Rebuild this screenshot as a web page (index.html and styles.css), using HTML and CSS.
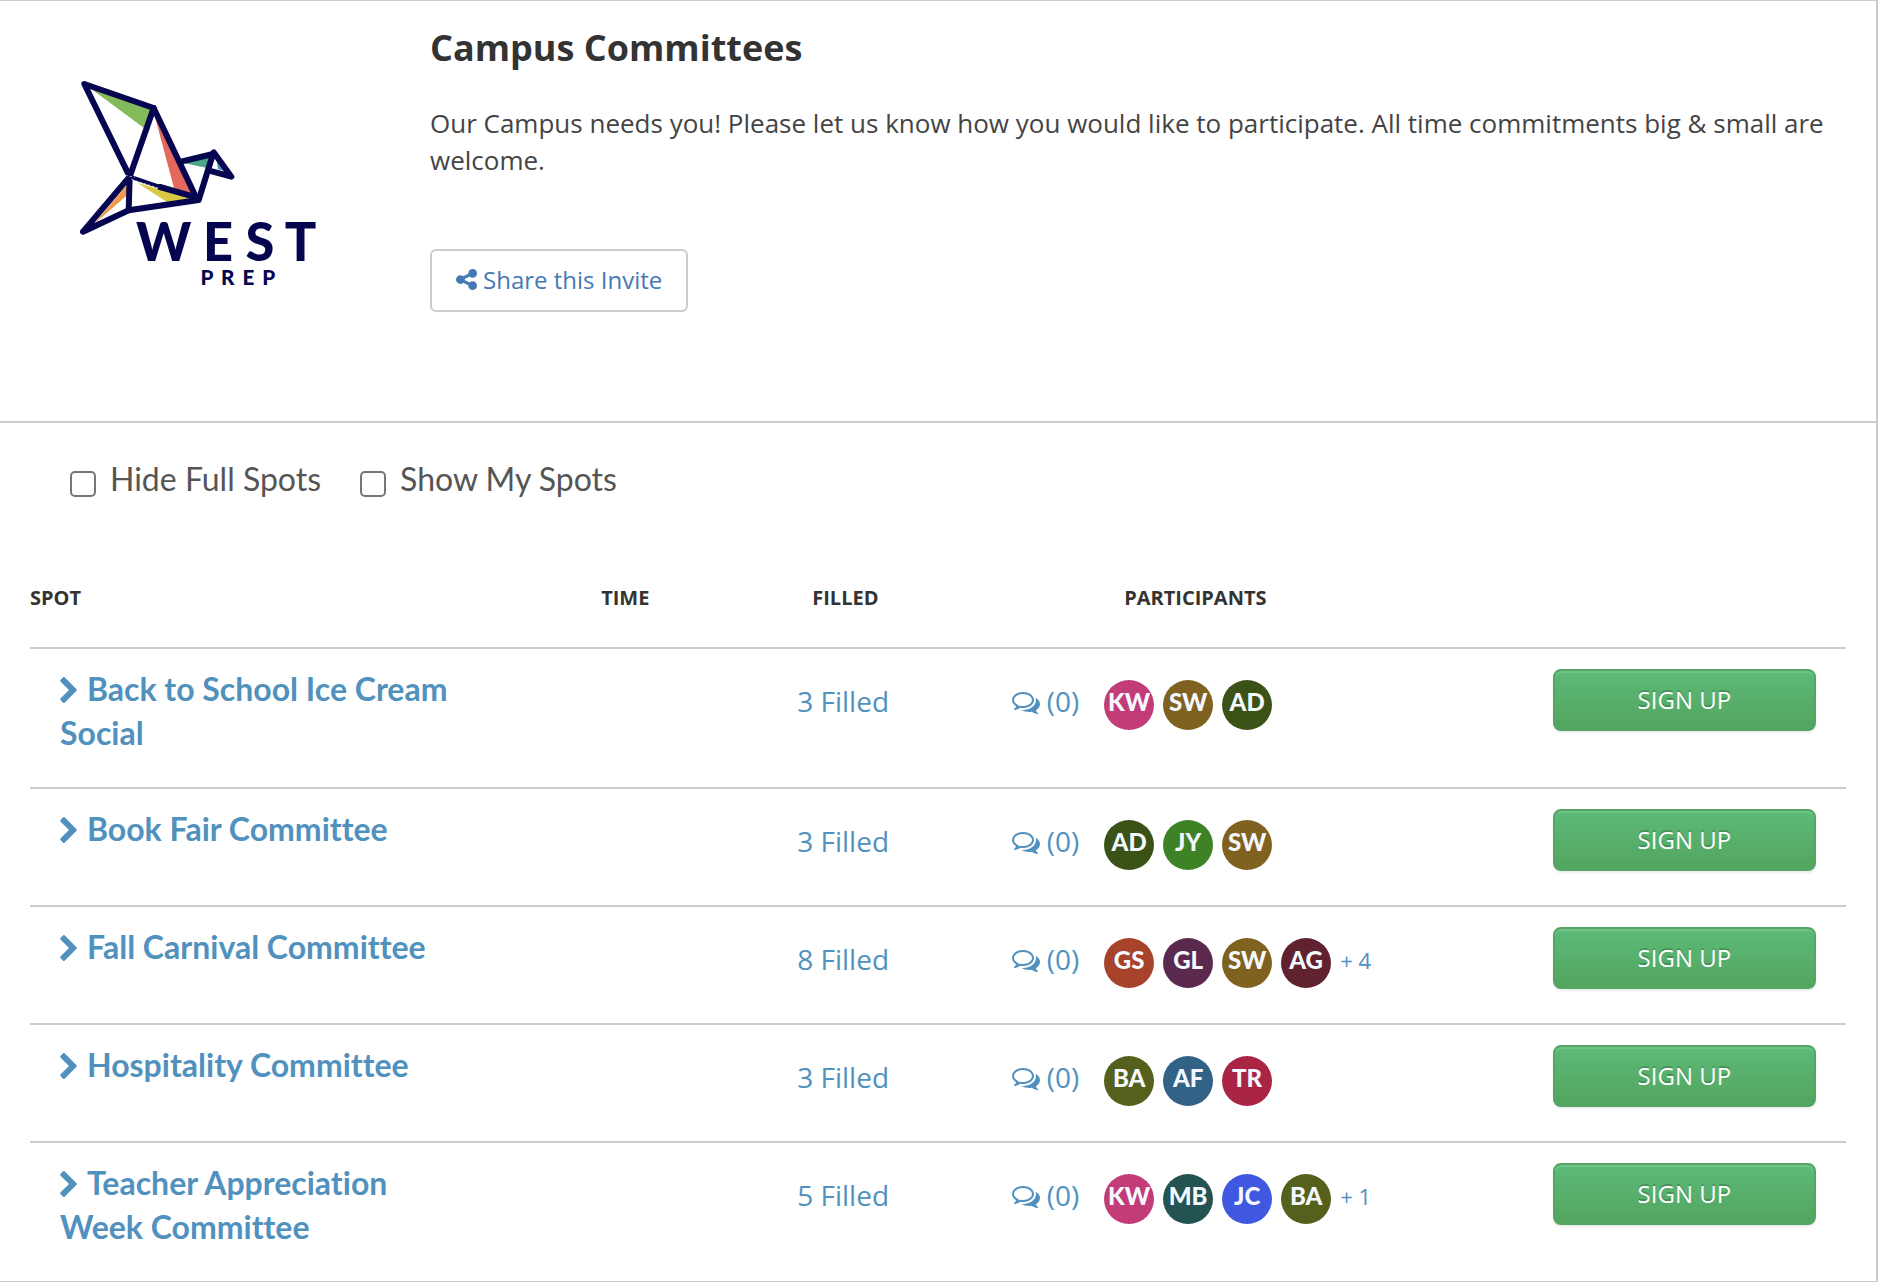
FILE: index.html
```html
<!DOCTYPE html>
<html lang="en">
<head>
<meta charset="utf-8">
<title>Campus Committees</title>
<link rel="stylesheet" href="styles.css">
</head>
<body>
<svg class="sprite" aria-hidden="true">
  <symbol id="share" viewBox="128 128 1536 1536"><path d="M1344 1024q133 0 226.500 93.500t93.500 226.500-93.500 226.500-226.500 93.500-226.500-93.500-93.500-226.500q0-12 2-34l-360-180q-92 86-218 86-133 0-226.500-93.500t-93.500-226.500 93.500-226.500 226.500-93.500q126 0 218 86l360-180q-2-22-2-34 0-133 93.500-226.500t226.500-93.500 226.500 93.500 93.500 226.500-93.500 226.500-226.500 93.500q-126 0-218-86l-360 180q2 22 2 34t-2 34l360 180q92-86 218-86z"/></symbol>
  <symbol id="chevron" viewBox="346 26 1036 1612"><path d="M1363 877l-742 742q-19 19-45 19t-45-19l-166-166q-19-19-19-45t19-45l531-531-531-531q-19-19-19-45t19-45l166-166q19-19 45-19t45 19l742 742q19 19 19 45t-19 45z"/></symbol>
  <symbol id="comments" viewBox="0 256 1792 1408"><path d="M704 384q-153 0-286 52t-211.500 141-78.500 191q0 82 53 158t149 132l97 56-35 84q34-20 62-39l44-31 53 10q78 14 153 14 153 0 286-52t211.500-141 78.500-191-78.500-191-211.500-141-286-52zm0-128q191 0 353.500 68.500t256.500 186.500 94 257-94 257-256.500 186.500-353.500 68.500q-86 0-176-16-124 88-278 128-36 9-86 16h-3q-11 0-20.500-8t-11.500-21q-1-3-1-6.500t.5-6.500 2-6l2.500-5 3.500-5.500 4-5 4.500-5 4-4.500q5-6 23-25t26-29.500 22.500-29 25-38.500 20.500-44q-124-72-195-177t-71-224q0-139 94-257t256.500-186.500 353.500-68.500zm822 1169q10 24 20.500 44t25 38.500 22.500 29 26 29.500 23 25q1 1 4 4.500t4.500 5 4 5 3.500 5.500l2.500 5 2 6 .5 6.500-1 6.500q-3 14-13 22t-22 7q-50-7-86-16-154-40-278-128-90 16-176 16-271 0-472-132 58 4 88 4 161 0 309-45t264-129q125-92 192-212t67-254q0-77-23-152 129 71 204 178t75 230q0 120-71 224.500t-195 176.500z"/></symbol>
</svg>
<main class="page">
  <header class="invite">
    <svg class="logo" viewBox="0 0 840 720" role="img" aria-label="West Prep">
      <path fill="#84ba59" d="M95 88L276 150L252 204Z"/>
      <path fill="#e2695c" d="M282 160L408 408L342 384Z"/>
      <path fill="#4ba587" d="M368 308L460 286L445 325Z"/>
      <path fill="#4a9cc0" d="M470 302L492 332L474 328Z"/>
      <path fill="#d8ca40" d="M232 368L390 416L322 427Z"/>
      <path fill="#f09a4c" d="M203 372L203 404L102 492Z"/>
      <g fill="none" stroke="#05064f" stroke-width="18" stroke-linejoin="round" stroke-linecap="round">
        <path d="M209 350L73 72L281 144L411 418"/>
        <path d="M281 144L209 350L69 515L206 451L209 350"/>
        <path d="M300 381L411 413"/>
        <path d="M206 451L416 420L459 282L366 304"/>
        <path d="M461 277L514 350L456 334"/>
      </g>
      <path fill="none" stroke="#05064f" stroke-width="12" d="M209 350L304 382"/>
      <path fill="none" stroke="#fff" stroke-width="2" stroke-dasharray="7 6" d="M214 358L300 386M196 346L224 352"/>
      <g class="logo-text" text-anchor="middle">
        <text class="logo-west" x="311 474 600 722" y="603">WEST</text>
        <text class="logo-prep" x="441 503 565 626" y="675">PREP</text>
      </g>
    </svg>
    <div class="intro">
      <h1>Campus Committees</h1>
      <p>Our Campus needs you! Please let us know how you would like to participate. All time commitments big &amp; small are welcome.</p>
      <button class="share" type="button"><svg class="share-icon"><use href="#share"/></svg>Share this Invite</button>
    </div>
  </header>
  <section class="spots">
    <form class="filters">
      <label><input type="checkbox">Hide Full Spots</label>
      <label><input type="checkbox">Show My Spots</label>
    </form>
    <table>
      <colgroup><col class="c-spot"><col class="c-time"><col class="c-filled"><col class="c-talk"><col class="c-people"><col class="c-action"></colgroup>
      <thead>
        <tr><th>SPOT</th><th>TIME</th><th class="th-filled">FILLED</th><th></th><th class="th-people">PARTICIPANTS</th><th></th></tr>
      </thead>
      <tbody>
        <tr>
          <td class="spot"><a href="#"><svg class="chevron"><use href="#chevron"/></svg>Back to School Ice Cream Social</a></td><td></td>
          <td class="info"><a href="#">3 Filled</a></td>
          <td class="info"><a href="#"><svg class="comments"><use href="#comments"/></svg> (0)</a></td>
          <td class="people"><div><span class="avatar kw">KW</span><span class="avatar sw">SW</span><span class="avatar ad">AD</span></div></td>
          <td class="action"><button type="button">SIGN UP</button></td>
        </tr>
        <tr>
          <td class="spot"><a href="#"><svg class="chevron"><use href="#chevron"/></svg>Book Fair Committee</a></td><td></td>
          <td class="info"><a href="#">3 Filled</a></td>
          <td class="info"><a href="#"><svg class="comments"><use href="#comments"/></svg> (0)</a></td>
          <td class="people"><div><span class="avatar ad">AD</span><span class="avatar jy">JY</span><span class="avatar sw">SW</span></div></td>
          <td class="action"><button type="button">SIGN UP</button></td>
        </tr>
        <tr>
          <td class="spot"><a href="#"><svg class="chevron"><use href="#chevron"/></svg>Fall Carnival Committee</a></td><td></td>
          <td class="info"><a href="#">8 Filled</a></td>
          <td class="info"><a href="#"><svg class="comments"><use href="#comments"/></svg> (0)</a></td>
          <td class="people"><div><span class="avatar gs">GS</span><span class="avatar gl">GL</span><span class="avatar sw">SW</span><span class="avatar ag">AG</span><a class="more" href="#">+ 4</a></div></td>
          <td class="action"><button type="button">SIGN UP</button></td>
        </tr>
        <tr>
          <td class="spot"><a href="#"><svg class="chevron"><use href="#chevron"/></svg>Hospitality Committee</a></td><td></td>
          <td class="info"><a href="#">3 Filled</a></td>
          <td class="info"><a href="#"><svg class="comments"><use href="#comments"/></svg> (0)</a></td>
          <td class="people"><div><span class="avatar ba">BA</span><span class="avatar af">AF</span><span class="avatar tr">TR</span></div></td>
          <td class="action"><button type="button">SIGN UP</button></td>
        </tr>
        <tr>
          <td class="spot"><a href="#"><svg class="chevron"><use href="#chevron"/></svg>Teacher Appreciation Week Committee</a></td><td></td>
          <td class="info"><a href="#">5 Filled</a></td>
          <td class="info"><a href="#"><svg class="comments"><use href="#comments"/></svg> (0)</a></td>
          <td class="people"><div><span class="avatar kw">KW</span><span class="avatar mb">MB</span><span class="avatar jc">JC</span><span class="avatar ba">BA</span><a class="more" href="#">+ 1</a></div></td>
          <td class="action"><button type="button">SIGN UP</button></td>
        </tr>
      </tbody>
    </table>
  </section>
</main>
</body>
</html>
```
FILE: styles.css
```css
* { box-sizing: border-box; }

body {
  margin: 0;
  background: #fff;
  color: #444;
  font-family: "Open Sans", sans-serif;
  font-size: 26px;
  font-variant-ligatures: none;
}

a { color: #5191bd; text-decoration: none; }
svg { fill: currentColor; }
.sprite { display: none; }

.page {
  border: 1px solid #ccc;
  border-width: 1px 2px 1px 0;
}

/* Invite header */
.invite {
  display: flex;
  align-items: flex-start;
  gap: 90px;
  padding: 23px 30px 109px 60px;
  border-bottom: 2px solid #ccc;
}

.logo {
  flex: none;
  width: 280px;
  height: 240px;
  margin-top: 36px;
}

.logo-text { fill: #05064f; font-family: Lato, sans-serif; font-weight: 900; }
.logo-west { font-size: 157px; }
.logo-prep { font-size: 62px; }

h1 {
  margin: 0 0 33px;
  color: #333;
  font-size: 36px;
  line-height: 48px;
}

.intro p { margin: 0 0 70px; line-height: 37px; }

.share {
  display: flex;
  align-items: center;
  gap: 6px;
  height: 63px;
  padding: 0 24px 2px;
  border: 2px solid #ccc;
  border-radius: 6px;
  background: #fff;
  color: #4479b5;
  font: 24px "Open Sans", sans-serif;
}

.share-icon { width: 21px; height: 21px; }

/* Spots list */
.spots { padding: 34px 30px 0; }

.filters {
  display: flex;
  gap: 39px;
  padding-left: 40px;
  margin-bottom: 48px;
  color: #555;
  font-family: Lato, sans-serif;
  font-size: 32px;
  line-height: 44px;
}

.filters label { display: flex; gap: 14px; }

.filters input {
  appearance: none;
  width: 26px;
  height: 26px;
  margin: 14px 0 0;
  border: 2px solid #767676;
  border-radius: 5px;
  background: #fff;
}

table { width: 100%; table-layout: fixed; border-collapse: separate; border-spacing: 0; }
.c-spot { width: 31.45%; }
.c-time { width: 10.8%; }
.c-filled { width: 11.8%; }
.c-talk { width: 5.1%; }
.c-people { width: 24.7%; }

th {
  padding: 35px 0;
  color: #333;
  font-size: 20px;
  line-height: 28px;
  text-align: left;
}

.th-filled { padding-left: 15px; }
.th-people { padding-left: 20px; }

td { padding: 0; border-top: 2px solid #ccc; vertical-align: top; }

td.spot {
  padding: 18px 136px 32px 30px;
  font-family: Lato, sans-serif;
  font-size: 32px;
  font-weight: 700;
  line-height: 44px;
}

.chevron { width: 17px; height: 26px; margin: 0 10px -2px 0; }

td.info { padding-top: 32px; font-size: 28px; line-height: 40px; white-space: nowrap; }
.comments { width: 28px; height: 22px; margin-bottom: -2px; }

td.people { padding-top: 31px; }
.people div { display: flex; align-items: center; gap: 9px; }

.avatar {
  width: 50px;
  height: 50px;
  border-radius: 50%;
  color: #f5f9ff;
  font: 900 24px/44px Lato, sans-serif;
  text-align: center;
}

.kw { background: #c23c78; }
.sw { background: #806220; }
.ad { background: #3a5216; }
.jy { background: #3e8226; }
.gs { background: #a8432b; }
.gl { background: #5c294e; }
.ag { background: #60222f; }
.ba { background: #54601c; }
.af { background: #336287; }
.tr { background: #aa2444; }
.mb { background: #235452; }
.jc { background: #4058e0; }

.more { font-size: 22px; line-height: 44px; height: 50px; }

td.action { padding: 20px 30px 34px 0; }

.action button {
  display: block;
  width: 100%;
  height: 62px;
  padding: 0 0 2px;
  border: 2px solid #53a561;
  border-radius: 8px;
  background: linear-gradient(#5cba78, #53a55f);
  box-shadow: inset 0 2px 0 #72c38a, 0 2px 2px rgba(0, 0, 0, .08);
  color: #fff;
  font: 24px "Open Sans", sans-serif;
  text-shadow: 0 -2px 0 rgba(0, 0, 0, .2);
}
```
